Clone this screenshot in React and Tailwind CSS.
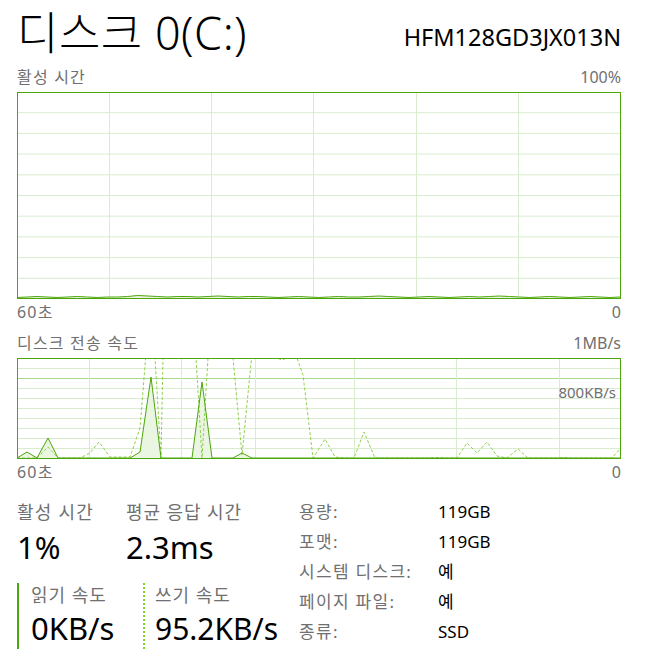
import React from "react";

const GREEN = "#4da60c";
const LIGHT = "#8fd14f";
const GRID = "#d9ecce";

// chart 1: active time, almost flat at the bottom
const activeBumps = [
  0.5, 1, 1.5, 1, 0.5, 1, 1.5, 1, 0.5, 1, 1, 1.5, 2.5, 2, 1.5, 1, 1.5, 1.5, 1, 1.5,
  2, 1.5, 1, 1.5, 1.5, 1, 0.5, 1, 1.5, 1, 0.5, 1, 1.5, 1, 1, 1.5, 2, 1.5, 1, 0.5,
  1, 1.5, 1, 0.5, 1, 1.5, 1, 1.5, 2, 1.5, 1, 0.5, 1, 1.5, 1, 0.5, 1, 1.5, 1, 0.5, 1,
];

// chart 2: transfer rate, x 0..603, y 0..100 (100 = bottom)
const readPts = [
  [0, 100], [10, 94], [20, 100], [31, 80], [41, 100], [113, 100], [123, 94], [134, 19],
  [144, 100], [175, 100], [185, 24], [195, 100], [216, 100], [225, 95], [235, 100], [603, 100],
];

const writePts = [
  [0, 100], [20, 100], [31, 89], [41, 100], [63, 100], [73, 95], [82, 84], [93, 99],
  [113, 99], [123, 70], [134, -67], [144, 100], [154, -400], [165, -300], [175, -67],
  [185, 100], [195, -67], [205, -100], [215, -11], [225, 97], [235, -5], [245, -50],
  [255, -20], [260, 0], [265, 2], [270, 0], [280, 0], [286, 17], [296, 100], [308, 81],
  [318, 99], [326, 100], [337, 100], [347, 74], [358, 100], [410, 100], [420, 99.5],
  [430, 100], [440, 100], [450, 85], [460, 95], [470, 84], [480, 98], [490, 100],
  [501, 91], [511, 100], [540, 100], [545, 99.5], [555, 100], [595, 100], [603, 91],
];

const toStr = (pts) => pts.map(([x, y]) => `${x},${y}`).join(" ");

function ActiveChart() {
  const w = 604;
  const h = 207;
  const rows = Array.from({ length: 9 }, (_, i) => ((i + 1) * h) / 10);
  const cols = [92, 194, 296, 399, 501];
  const pts = activeBumps.map((v, i) => [(i * (w - 1)) / 60, h - 1 - v]);
  return (
    <svg width={w} height={h} className="block">
      {rows.map((y) => (
        <line key={y} x1="0" x2={w} y1={y} y2={y} stroke={GRID} strokeWidth="1" />
      ))}
      {cols.map((x) => (
        <line key={x} x1={x + 0.5} x2={x + 0.5} y1="0" y2={h} stroke={GRID} strokeWidth="1" />
      ))}
      <polygon points={`0,${h} ${toStr(pts)} ${w},${h}`} fill="#e9f4e0" />
      <polyline points={toStr(pts)} fill="none" stroke={GREEN} strokeWidth="1" />
      <rect x="0.5" y="0.5" width={w - 1} height={h - 1} fill="none" stroke={GREEN} strokeWidth="1" />
    </svg>
  );
}

function TransferChart() {
  const w = 604;
  const h = 101;
  const rows = [10, 20, 30, 40, 50, 60, 70, 80, 90];
  const cols = [72, 164, 238, 337, 439, 542];
  return (
    <svg width={w} height={h} className="block">
      {rows.map((y) => (
        <line
          key={y}
          x1="0"
          x2={w}
          y1={y + 0.5}
          y2={y + 0.5}
          stroke={y === 20 ? "#a8d990" : GRID}
          strokeWidth="1"
        />
      ))}
      {cols.map((x) => (
        <line key={x} x1={x + 0.5} x2={x + 0.5} y1="0" y2={h} stroke={GRID} strokeWidth="1" />
      ))}
      <polygon points={`0,100 ${toStr(readPts)} 603,100`} fill="#eaf5e2" />
      <polyline points={toStr(writePts)} fill="none" stroke={LIGHT} strokeWidth="1" strokeDasharray="3 2" />
      <polyline points={toStr(readPts)} fill="none" stroke={GREEN} strokeWidth="1" />
      <rect x="0.5" y="0.5" width={w - 1} height={h - 1} fill="none" stroke={GREEN} strokeWidth="1" />
    </svg>
  );
}

function Row({ left, right }) {
  return (
    <div className="flex h-[26px] items-center justify-between text-[16px] text-[#707070]">
      <span className="tracking-[1.2px]">{left}</span>
      <span>{right}</span>
    </div>
  );
}

const info = [
  ["용량:", "119GB"],
  ["포맷:", "119GB"],
  ["시스템 디스크:", "예"],
  ["페이지 파일:", "예"],
  ["종류:", "SSD"],
];

export default function App() {
  return (
    <div className="w-[645px] h-[672px] bg-white pl-[17px] pr-[24px] text-black [font-family:'Noto_Sans','Noto_Sans_CJK_KR',sans-serif] overflow-hidden">
      {/* header */}
      <div className="flex h-[64px] items-center justify-between">
        <h1 className="text-[45px] font-light leading-none tracking-[0.5px]">디스크 0(C:)</h1>
        <span className="mt-[12px] text-[23.5px] leading-none">HFM128GD3JX013N</span>
      </div>

      <Row left="활성 시간" right="100%" />
      <div className="mt-[2px]">
        <ActiveChart />
      </div>
      <Row left="60초" right="0" />
      <div className="mt-[5px]">
        <Row left="디스크 전송 속도" right="1MB/s" />
      </div>
      <div className="relative mt-[2px]">
        <TransferChart />
        <span className="absolute right-[5px] top-[23px] text-[15px] text-[#707070]">800KB/s</span>
      </div>
      <Row left="60초" right="0" />

      {/* stats */}
      <div className="mt-[12px] flex">
        <div className="w-[282px]">
          <div className="flex">
            <div className="w-[109px]">
              <div className="flex h-[30px] items-center text-[18px] tracking-[1.2px] text-[#707070]">활성 시간</div>
              <div className="flex h-[40px] items-center text-[31px]">1%</div>
            </div>
            <div>
              <div className="flex h-[30px] items-center text-[18px] tracking-[0.9px] text-[#707070]">평균 응답 시간</div>
              <div className="flex h-[40px] items-center text-[31px]">2.3ms</div>
            </div>
          </div>
          <div className="mt-[16px] flex h-[66px]">
            <div className="w-[126px] border-l-2 border-[#4da60c] pl-[12px]">
              <div className="flex h-[24px] items-center text-[18px] tracking-[1px] text-[#707070]">읽기 속도</div>
              <div className="flex h-[42px] items-center text-[31px]">0KB/s</div>
            </div>
            <div className="border-l-2 border-dotted border-[#7ed321] pl-[10px]">
              <div className="flex h-[24px] items-center text-[18px] tracking-[1px] text-[#707070]">쓰기 속도</div>
              <div className="flex h-[42px] items-center text-[30px]">95.2KB/s</div>
            </div>
          </div>
        </div>
        <div className="flex-1">
          {info.map(([k, v]) => (
            <div key={k} className="flex h-[30px] items-center text-[17px]">
              <span className="w-[139px] tracking-[1.3px] text-[#707070]">{k}</span>
              <span>{v}</span>
            </div>
          ))}
        </div>
      </div>
    </div>
  );
}
